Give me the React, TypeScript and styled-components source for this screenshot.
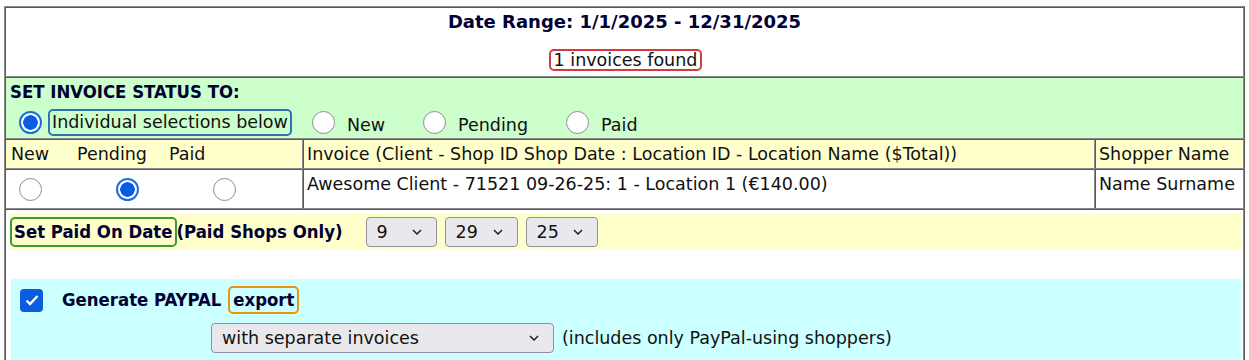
import styled, { createGlobalStyle } from "styled-components";

const GlobalStyle = createGlobalStyle`
  body {
    margin: 0;
    padding: 6px 0 0 4px;
    background: #ffffff;
    font-family: "DejaVu Sans", Verdana, sans-serif;
    color: #111111;
  }
`;

const statusOptions = ["New", "Pending", "Paid"];

export default function App() {
  return (
    <>
      <GlobalStyle />
      <InvoiceTable>
        <colgroup>
          <col style={{ width: 298 }} />
          <col style={{ width: 792 }} />
          <col />
        </colgroup>
        <tbody>
          <tr>
            <SummaryCell colSpan={3}>
              <DateRange>Date Range: 1/1/2025 - 12/31/2025</DateRange>
              <FoundBadge>1 invoices found</FoundBadge>
            </SummaryCell>
          </tr>
          <tr>
            <StatusCell colSpan={3}>
              <SectionTitle>SET INVOICE STATUS TO:</SectionTitle>
              <RadioRow>
                <RadioLabel>
                  <Radio type="radio" name="all" defaultChecked />
                  <Outlined $color="#2f73b8" $height={23}>
                    Individual selections below
                  </Outlined>
                </RadioLabel>
                {statusOptions.map((s) => (
                  <RadioLabel key={s}>
                    <Radio type="radio" name="all" />
                    <span>{s}</span>
                  </RadioLabel>
                ))}
              </RadioRow>
            </StatusCell>
          </tr>
          <HeaderRow>
            <td>
              <StatusGrid>
                {statusOptions.map((s) => (
                  <span key={s}>{s}</span>
                ))}
              </StatusGrid>
            </td>
            <td>Invoice (Client - Shop ID Shop Date : Location ID - Location Name ($Total))</td>
            <td>Shopper Name</td>
          </HeaderRow>
          <DataRow>
            <td>
              <RadioGrid>
                {statusOptions.map((s) => (
                  <Radio key={s} type="radio" name="inv1" defaultChecked={s === "Pending"} />
                ))}
              </RadioGrid>
            </td>
            <td>Awesome Client - 71521 09-26-25: 1 - Location 1 (€140.00)</td>
            <td>Name Surname</td>
          </DataRow>
          <tr>
            <ActionsCell colSpan={3}>
              <PaidBar>
                <BoldText>
                  <Outlined $color="#3a9a3a" $height={26}>
                    Set Paid On Date
                  </Outlined>
                  (Paid Shops Only)
                </BoldText>
                <Selects>
                  <SmallSelect $width={71} defaultValue="9">
                    <option>9</option>
                  </SmallSelect>
                  <SmallSelect $width={73} defaultValue="29">
                    <option>29</option>
                  </SmallSelect>
                  <SmallSelect $width={72} defaultValue="25">
                    <option>25</option>
                  </SmallSelect>
                </Selects>
              </PaidBar>
              <ExportBox>
                <ExportHead>
                  <Check type="checkbox" defaultChecked />
                  <BoldText>
                    Generate PAYPAL
                    <Outlined $color="#e8950f" $height={24} $offset={7}>
                      export
                    </Outlined>
                  </BoldText>
                </ExportHead>
                <ExportOptions>
                  <SmallSelect $width={343} defaultValue="sep">
                    <option value="sep">with separate invoices</option>
                  </SmallSelect>
                  <span>(includes only PayPal-using shoppers)</span>
                </ExportOptions>
              </ExportBox>
            </ActionsCell>
          </tr>
        </tbody>
      </InvoiceTable>
    </>
  );
}

const chevron =
  "url(\"data:image/svg+xml;utf8,<svg xmlns='http://www.w3.org/2000/svg' width='10' height='6' viewBox='0 0 10 6'><path d='M1 1l4 4 4-4' fill='none' stroke='%23222' stroke-width='1.5'/></svg>\")";

const InvoiceTable = styled.table`
  width: 1241px;
  border-collapse: separate;
  border-spacing: 0;
  border: 1px solid #8a8a8a;
  border-right-color: #5a5a5a;
  border-bottom-color: #5a5a5a;
  table-layout: fixed;
  font-size: 17.5px;

  td {
    border: 1px solid #8a8a8a;
    border-top-color: #5a5a5a;
    border-left-color: #5a5a5a;
    padding: 0 3px;
    vertical-align: top;
  }
`;

const SummaryCell = styled.td`
  && {
    height: 68px;
    text-align: center;
    background: #ffffff;
  }
`;

const DateRange = styled.div`
  font-weight: bold;
  font-size: 18px;
  color: #000033;
  margin-top: 2px;
  line-height: 24px;
`;

const FoundBadge = styled.span`
  display: inline-block;
  margin-top: 15px;
  padding: 0 3px;
  line-height: 18px;
  border: 2px solid #d83a3a;
  border-radius: 5px;
  margin-left: 2px;
`;

const StatusCell = styled.td`
  && {
    height: 60px;
    background: #ccffcc;
    padding: 0 4px;
  }
`;

const SectionTitle = styled.div`
  font-family: "DejaVu Sans Condensed", "DejaVu Sans", sans-serif;
  font-weight: bold;
  font-size: 18.4px;
  color: #000033;
  margin-top: 2px;
  line-height: 24px;
`;

const RadioRow = styled.div`
  display: flex;
  align-items: center;
  margin-top: 5px;
  padding-left: 9px;
`;

const RadioLabel = styled.label`
  display: flex;
  align-items: center;
  gap: 12px;
  margin-right: 38px;

  &:first-child {
    gap: 6px;
    margin-right: 20px;
  }

  span {
    margin-top: 4px;
  }
`;

const Outlined = styled.span<{ $color: string; $height: number; $offset?: number }>`
  display: inline-block;
  border: 2px solid ${({ $color }) => $color};
  border-radius: 5px;
  padding: 0 ${({ $offset }) => ($offset ? 3 : 2)}px;
  line-height: ${({ $height }) => $height}px;
  && {
    margin-top: 0;
    margin-left: ${({ $offset = 0 }) => $offset}px;
  }
`;

const Radio = styled.input`
  appearance: none;
  width: 23px;
  height: 23px;
  margin: 0;
  border-radius: 50%;
  border: 1px solid #8d8d95;
  background: #ffffff;
  flex: none;

  &:checked {
    border: 2px solid #1a6fe0;
    background: radial-gradient(circle, #0b5ce0 0 7px, #ffffff 7.5px);
  }
`;

const HeaderRow = styled.tr`
  td {
    background: #ffffcc;
    height: 28px;
    line-height: 28px;
  }
`;

const StatusGrid = styled.div`
  display: grid;
  grid-template-columns: 66px 92px 60px;
  padding-left: 2px;
`;

const DataRow = styled.tr`
  td {
    background: #ffffff;
    height: 38px;
    line-height: 28px;
  }
`;

const RadioGrid = styled.div`
  display: grid;
  grid-template-columns: repeat(3, 23px);
  column-gap: 74px;
  padding: 8px 0 0 10px;
`;

const ActionsCell = styled.td`
  && {
    padding: 4px 2px 0 3px;
    height: 150px;
  }
`;

const PaidBar = styled.div`
  display: flex;
  align-items: center;
  gap: 23px;
  height: 36px;
  background: #ffffcc;
`;

const BoldText = styled.span`
  font-family: "DejaVu Sans Condensed", "DejaVu Sans", sans-serif;
  font-weight: bold;
  font-size: 18.4px;
  color: #000033;
  padding-left: 1px;
`;

const Selects = styled.div`
  display: flex;
  gap: 8px;
`;

const SmallSelect = styled.select<{ $width: number }>`
  appearance: none;
  width: ${({ $width }) => $width}px;
  height: 30px;
  padding: 0 10px;
  font-family: "DejaVu Sans", sans-serif;
  font-size: 17.5px;
  color: #111111;
  background: #e9e9ed ${chevron} no-repeat right 14px center;
  border: 1px solid #8f8f9d;
  border-radius: 4px;
`;

const ExportBox = styled.div`
  margin: 29px 0 0 2px;
  background: #ccffff;
  padding: 7px 0 8px 9px;
`;

const ExportHead = styled.div`
  display: flex;
  align-items: center;
  gap: 18px;
`;

const Check = styled.input`
  appearance: none;
  width: 23px;
  height: 23px;
  margin: 0;
  border-radius: 4px;
  background: #0b5ce0
    url("data:image/svg+xml;utf8,<svg xmlns='http://www.w3.org/2000/svg' width='14' height='12' viewBox='0 0 14 12'><path d='M1.5 6.5l3.5 3.5 7.5-8' fill='none' stroke='white' stroke-width='2.4'/></svg>")
    no-repeat center;
`;

const ExportOptions = styled.div`
  display: flex;
  align-items: center;
  gap: 8px;
  margin: 9px 0 0 191px;
`;
